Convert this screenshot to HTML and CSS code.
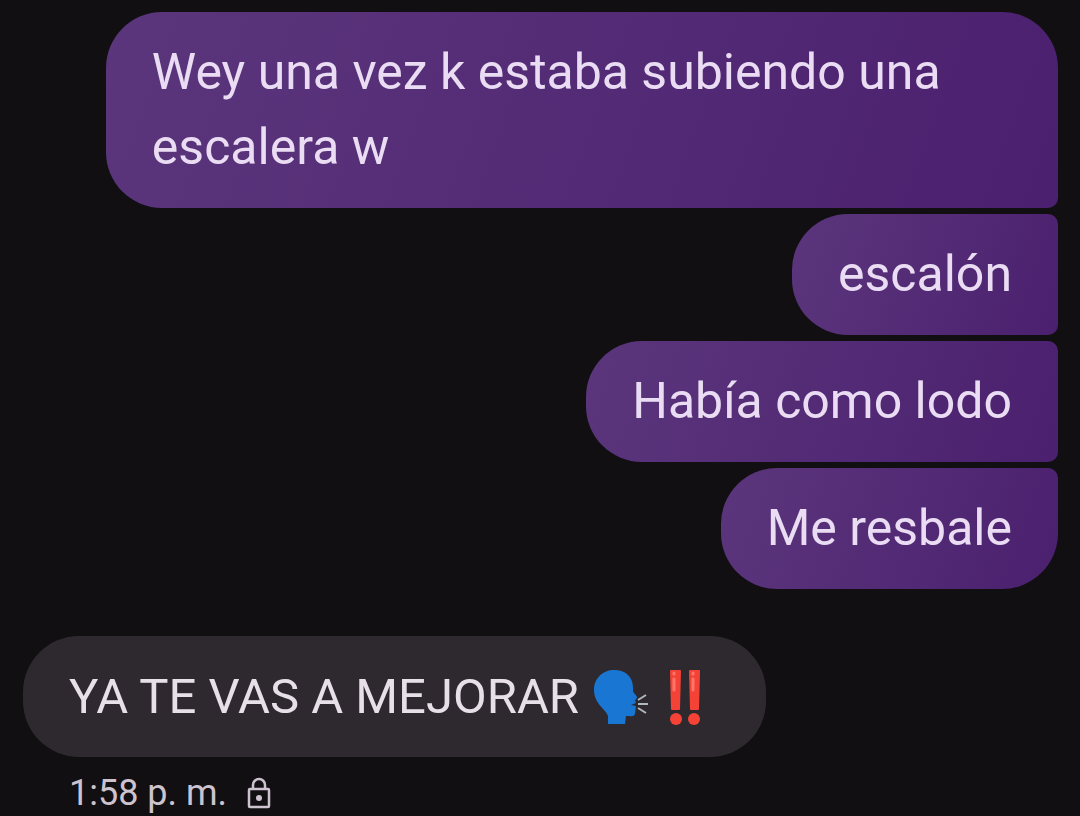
FILE: index.html
```html
<!doctype html>
<html lang="es">
<head>
<meta charset="UTF-8">
<title>Mensajes</title>
<meta name="viewport" content="width=device-width, initial-scale=1">
<link rel="stylesheet" href="styles.css">
</head>
<body>
<main class="chat">
  <div class="group sent">
    <p class="bubble">Wey una vez k estaba subiendo una escalera w</p>
    <p class="bubble">escalón</p>
    <p class="bubble">Había como lodo</p>
    <p class="bubble">Me resbale</p>
  </div>
  <div class="group received">
    <p class="bubble">
      <span>YA TE VAS A MEJORAR</span>
      <span class="emojis">
        <svg class="emoji" viewBox="2 0 62 60" role="img" aria-label="Cabeza hablando">
          <path fill="#1976d2" d="M17 57V49C15 42 3 37 3 23C3 11 12 3 23 3C35 3 42 10 42 21V24C42 26 46 28 46 31L44 33L45 36L40 38L45 39L44 47C43 50 40 49 35 49L34 57Z"/>
          <path fill="none" stroke="#b0b8bc" stroke-width="2" d="M47 33L55 28M47 37H57M47 41L55 46"/>
        </svg>
        <svg class="emoji" viewBox="2 0 62 60" role="img" aria-label="Doble exclamación">
          <g fill="#f44336">
            <path d="M14 4Q14 3 15 3H24Q25 3 25 4L24 42Q24 43 23 43H16Q15 43 15 42Z"/>
            <path d="M33 4Q33 3 34 3H43Q44 3 44 4L43 42Q43 43 42 43H35Q34 43 34 42Z"/>
            <circle cx="20" cy="52" r="6"/>
            <circle cx="38" cy="52" r="6"/>
          </g>
          <path fill="none" stroke="#ff7669" stroke-width="3" stroke-linecap="round" d="M18 12V23M37 12V23M18 6V7M37 6V7"/>
        </svg>
      </span>
    </p>
    <div class="status">
      <time datetime="13:58">1:58 p. m.</time>
      <svg class="lock" viewBox="0 0 24 32" role="img" aria-label="Cifrado">
        <rect x="2" y="12" width="20" height="18" rx="1" fill="none" stroke="currentColor" stroke-width="2.5"/>
        <path d="M6 12V8a6 6 0 0 1 12 0V12" fill="none" stroke="currentColor" stroke-width="2.5"/>
        <circle cx="12" cy="21" r="3" fill="currentColor"/>
      </svg>
    </div>
  </div>
</main>
</body>
</html>
```
FILE: styles.css
```css
* { box-sizing: border-box; }
body { margin: 0; background: #110f12; color: #e8e0e8; font-family: "Roboto", "Liberation Sans", sans-serif; font-size: 50px; line-height: 75px; }
.chat { display: flex; flex-direction: column; gap: 47px; padding: 12px 22px 0 23px; }
.group { display: flex; flex-direction: column; gap: 6px; }
.sent { align-items: flex-end; }
.received { align-items: flex-start; }
.bubble { max-width: 92%; margin: 0; padding: 23px 46px; border-radius: 56px; }
.sent .bubble { color: #eadcf3; background: linear-gradient(110deg, #5b367c, #4b206f); border-radius: 56px 10px 10px 56px; }
.sent .bubble:first-child { border-top-right-radius: 56px; }
.sent .bubble:last-child { border-bottom-right-radius: 56px; }
.received .bubble { display: flex; align-items: center; gap: 14px; background: #2e292f; font-size: 49px; }
.emojis { display: flex; gap: 3px; }
.emoji { width: 62px; height: 60px; }
.status { display: flex; align-items: center; gap: 20px; padding: 6px 46px 0; color: #cdc3ce; font-size: 36px; line-height: 48px; }
.lock { width: 24px; height: 32px; }
```
